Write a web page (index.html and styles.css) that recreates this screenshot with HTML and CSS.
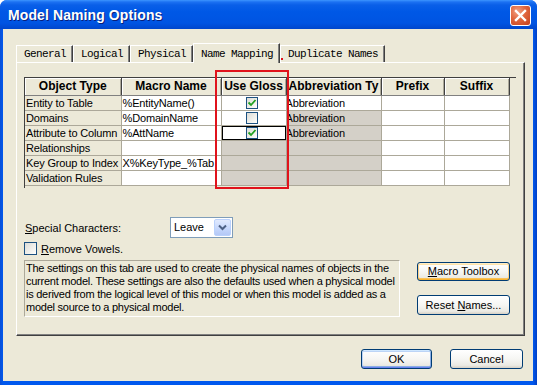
FILE: index.html
```html
<!DOCTYPE html>
<html>
<head>
<meta charset="utf-8">
<link rel="stylesheet" href="styles.css">
</head>
<body>
<div class="window">
  <div class="titlebar">
    <span class="title">Model Naming Options</span>
    <span class="close"><svg width="13" height="13" viewBox="0 0 13 13"><path d="M2 2 L11 11 M11 2 L2 11" stroke="#fff" stroke-width="2.4" stroke-linecap="square"/></svg></span>
  </div>
  <div class="client">
    <div class="tabs">
      <div class="tab">General</div>
      <div class="tab">Logical</div>
      <div class="tab">Physical</div>
      <div class="tab active">Name Mapping</div>
      <div class="tab">Duplicate Names</div>
    </div>
    <div class="panel">
      <div class="gridbox">
        <table class="grid">
          <colgroup>
            <col class="c-ot"><col class="c-mn"><col class="c-ug"><col class="c-ab"><col class="c-pr"><col class="c-su">
          </colgroup>
          <thead>
            <tr><th>Object Type</th><th>Macro Name</th><th>Use Gloss</th><th>Abbreviation Ty</th><th>Prefix</th><th>Suffix</th></tr>
          </thead>
          <tbody>
            <tr><td class="rh">Entity to Table</td><td>%EntityName()</td><td class="ck"><span class="cbox on"><svg width="10" height="10" viewBox="0 0 10 10"><path d="M1.5 4.5 L4 7 L8.5 2" fill="none" stroke="#21a121" stroke-width="1.8"/></svg></span></td><td class="ab">Abbreviation</td><td></td><td></td></tr>
            <tr><td class="rh">Domains</td><td>%DomainName</td><td class="ck"><span class="cbox"></span></td><td class="ab dis">Abbreviation</td><td></td><td></td></tr>
            <tr><td class="rh">Attribute to Column</td><td>%AttName</td><td class="ck focus"><span class="cbox on"><svg width="10" height="10" viewBox="0 0 10 10"><path d="M1.5 4.5 L4 7 L8.5 2" fill="none" stroke="#21a121" stroke-width="1.8"/></svg></span></td><td class="ab dis">Abbreviation</td><td></td><td></td></tr>
            <tr><td class="rh">Relationships</td><td></td><td class="dis"></td><td class="dis"></td><td></td><td></td></tr>
            <tr><td class="rh">Key Group to Index</td><td>X%KeyType_%Tab</td><td class="dis"></td><td class="dis"></td><td></td><td></td></tr>
            <tr><td class="rh">Validation Rules</td><td></td><td class="dis"></td><td class="dis"></td><td></td><td></td></tr>
          </tbody>
        </table>
      </div>
      <div class="special">
        <span class="lbl"><u>S</u>pecial Characters:</span>
        <div class="select">
          <span class="sel-val">Leave</span>
          <span class="sel-btn"><svg width="9" height="7" viewBox="0 0 9 7"><path d="M1 1.5 L4.5 5 L8 1.5" fill="none" stroke="#4d6185" stroke-width="2"/></svg></span>
        </div>
      </div>
      <div class="vowels"><span class="cbox plain"></span><span><u>R</u>emove Vowels.</span></div>
      <div class="bottom">
        <div class="desc">The settings on this tab are used to create the physical names of objects in the<br>current model. These settings are also the defaults used when a physical model<br>is derived from the logical level of this model or when this model is added as a<br>model source to a physical model.</div>
        <div class="side">
          <div class="btn hot"><u>M</u>acro Toolbox</div>
          <div class="btn">Reset <u>N</u>ames...</div>
        </div>
      </div>
    </div>
    <div class="footer">
      <div class="btn def">OK</div>
      <div class="btn">Cancel</div>
    </div>
  </div>
  <div class="annot-rect"></div>
  <div class="annot-line"></div>
</div>
</body>
</html>
```
FILE: styles.css
```css
* { box-sizing: border-box; }
html, body { margin: 0; padding: 0; }
body {
  width: 537px;
  height: 385px;
  overflow: hidden;
  background: #fff;
  font-family: "Liberation Sans", Arial, sans-serif;
  font-size: 11px;
  color: #000;
}
.window {
  position: relative;
  width: 537px;
  height: 385px;
  display: flex;
  flex-direction: column;
  background: linear-gradient(to right, #0a4fd6 0, #0058ee 3px, #0058ee 533px, #003fc4 537px);
  border-radius: 7px 7px 0 0;
  overflow: hidden;
}
.titlebar {
  flex: none;
  height: 29px;
  display: flex;
  align-items: center;
  justify-content: space-between;
  padding: 0 6px 0 8px;
  background: linear-gradient(to bottom, #3d95ff 0, #1c71f2 2px, #0a5fe8 5px, #0058e6 40%, #0054e2 80%, #0046cc 100%);
}
.title {
  color: #fff;
  font-weight: bold;
  font-size: 14px;
  letter-spacing: 0.1px;
  text-shadow: 1px 1px 0 #0a1e7a;
  margin-top: 1px;
}
.close {
  width: 21px;
  height: 21px;
  border: 1px solid #fff;
  border-radius: 3px;
  background: radial-gradient(circle at 35% 30%, #f2a184 0, #e0663e 45%, #c5401c 100%);
  display: flex;
  align-items: center;
  justify-content: center;
  margin-top: 1px;
}
.client {
  flex: 1;
  margin: 0 4px 4px 3px;
  background: #ece9d8;
  padding: 14px 8px 0 13px;
  display: flex;
  flex-direction: column;
}
.tabs {
  display: flex;
  align-items: flex-end;
  height: 19px;
  position: relative;
  z-index: 1;
}
.tab {
  height: 17px;
  padding: 1px 6px 0 7px;
  border-top: 1px solid #fff;
  border-left: 1px solid #fff;
  border-right: 1px solid #404040;
  box-shadow: inset -1px 0 #808080;
  font-family: "Liberation Mono", "Courier New", monospace;
  font-size: 11px;
  letter-spacing: -0.6px;
  line-height: 15px;
  color: #000;
}
.tab.active {
  height: 20px;
  margin-bottom: -1px;
  padding-top: 2px;
  background: #ece9d8;
  line-height: 16px;
}
.panel {
  height: 274px;
  border: 1px solid;
  border-color: #fff #404040 #404040 #fff;
  box-shadow: inset -1px -1px #808080;
  padding: 14px 0 0 7px;
  display: flex;
  flex-direction: column;
}
.gridbox {
  width: 492px;
  height: 111px;
  border-top: 1px solid #404040;
  border-left: 1px solid #404040;
  overflow: hidden;
}
.grid {
  border-collapse: collapse;
  table-layout: fixed;
  width: 484px;
}
.c-ot { width: 96px; }
.c-mn { width: 100px; }
.c-ug { width: 65px; }
.c-ab { width: 95px; }
.c-pr { width: 63px; }
.c-su { width: 65px; }
.grid th {
  height: 17px;
  padding: 0;
  font-size: 12px;
  font-weight: bold;
  text-align: center;
  white-space: nowrap;
  overflow: hidden;
  background: #ece9d8;
  border-right: 1px solid #404040;
  border-bottom: 1px solid #808080;
  box-shadow: inset 1px 1px #fff, inset -1px 0 #aca899;
  line-height: 16px;
}
.grid td {
  height: 15px;
  padding: 0 0 0 1px;
  border: 1px solid #aca899;
  border-top: none;
  border-left: none;
  background: #fff;
  white-space: nowrap;
  overflow: hidden;
  line-height: 14px;
  font-size: 11px;
  letter-spacing: -0.15px;
}
.grid td.rh { background: #ece9d8; padding-left: 1px; }
.grid td.ab { padding-left: 0; text-indent: -1px; }
.grid td.dis { background: #d4d0c8; }
.grid td.ck { text-align: center; padding: 0 4px 0 0; }
.grid td.focus { box-shadow: inset 0 0 0 1px #000; }
.cbox {
  display: inline-block;
  width: 12px;
  height: 12px;
  border: 1px solid #1c5180;
  background: linear-gradient(135deg, #dcdcd7 0, #f4f4f0 70%, #fff 100%);
  vertical-align: middle;
  position: relative;
  top: -1px;
}
.cbox svg { display: block; }
.special {
  display: flex;
  align-items: center;
  margin-top: 29px;
  height: 21px;
}
.lbl {
  width: 146px;
  padding-left: 1px;
  font-size: 11px;
}
.select {
  width: 63px;
  height: 21px;
  background: #fff;
  border: 1px solid #7f9db9;
  display: flex;
  align-items: stretch;
}
.sel-val {
  flex: 1;
  padding-left: 3px;
  line-height: 19px;
  font-size: 11px;
}
.sel-btn {
  width: 17px;
  margin: 1px;
  border: 1px solid #bad1fc;
  border-radius: 2px;
  background: linear-gradient(to bottom, #e1eafe 0, #c4d6fc 60%, #b4c8f6 100%);
  display: flex;
  align-items: center;
  justify-content: center;
}
.vowels {
  margin-top: 4px;
  height: 13px;
  display: flex;
  align-items: center;
  font-size: 11px;
}
.cbox.plain {
  width: 13px;
  height: 13px;
  border-color: #1c5180;
  margin-right: 4px;
  top: 0;
}
.bottom {
  margin-top: 5px;
  display: flex;
  align-items: flex-start;
}
.desc {
  flex: none;
  width: 376px;
  height: 57px;
  border: 1px solid;
  border-color: #aca899 #fff #fff #aca899;
  padding: 1px 0 0 1px;
  font-size: 11px;
  letter-spacing: -0.25px;
  line-height: 13px;
  white-space: nowrap;
  overflow: hidden;
}
.side {
  margin-left: 17px;
  margin-top: 2px;
  display: flex;
  flex-direction: column;
  gap: 14px;
}
.btn {
  width: 93px;
  height: 20px;
  border: 1px solid #003c74;
  border-radius: 3px;
  background: linear-gradient(to bottom, #fff 0, #f6f6f3 50%, #ebeae3 85%, #d6d0c5 100%);
  text-align: center;
  line-height: 18px;
  font-size: 11px;
}
.btn.hot {
  height: 19px;
  line-height: 17px;
  box-shadow: inset 0 1px #ffedc6, inset 0 -1px #f8b330, inset 1px 0 #fcd28a, inset -1px 0 #fcd28a, inset 0 2px #fde2a8, inset 0 -2px #f9c158;
}
.footer {
  margin-top: 13px;
  display: flex;
  justify-content: flex-end;
  gap: 18px;
  padding-right: 2px;
}
.footer .btn { width: 73px; }
.footer .btn.def {
  width: 71px;
  box-shadow: inset 0 1px #cee7ff, inset 0 -1px #6982ee, inset 1px 0 #bcd4f6, inset -1px 0 #89ade4, inset 0 2px #bcd4f6, inset 0 -2px #89ade4;
}
.annot-rect {
  position: absolute;
  left: 215px;
  top: 70px;
  width: 74px;
  height: 119px;
  border: 2px solid #e0131c;
}
.annot-line {
  position: absolute;
  left: 197px;
  top: 58px;
  width: 86px;
  height: 2px;
  background: #e0131c;
}
```
